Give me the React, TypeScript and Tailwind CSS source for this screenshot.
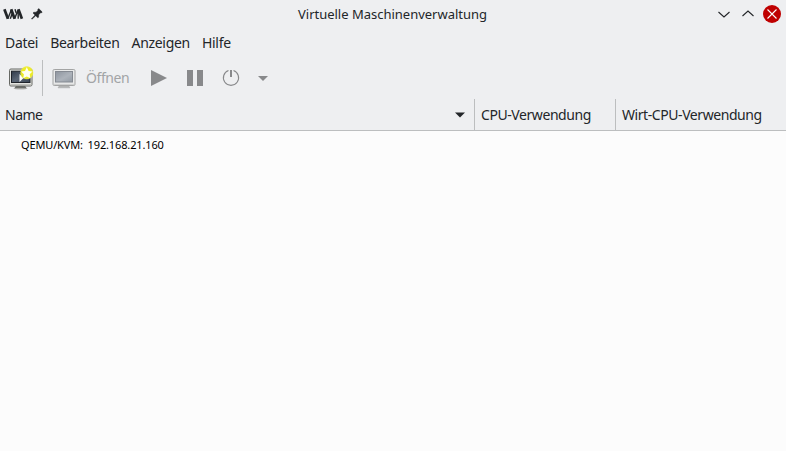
import type { ReactNode } from "react";

function Logo() {
  return (
    <svg className="h-[12px] w-[21px]" viewBox="0 0 21 12" fill="none">
      <g stroke="#232629" strokeWidth="2.7" strokeLinejoin="miter">
        <path d="M1.4 1.2L4.9 10.8" />
        <path d="M8.2 1.2L11.6 10.8" />
        <path d="M15.4 1.2L18.9 10.8" />
      </g>
      <g stroke="#232629" strokeWidth="1.4">
        <path d="M4.8 10.8L8.4 1.8" />
        <path d="M7.3 10.8L9.2 5.5" />
        <path d="M11.6 10.8L15.2 1.8V10.8" />
        <path d="M12 1.2L13.2 5" />
      </g>
    </svg>
  );
}

function Pin() {
  return (
    <svg className="h-[12px] w-[12px]" viewBox="0 0 12 12" fill="#232629">
      <path d="M7.7.6L11.2 4L10.3 4.9L9.6 4.7L7.7 6.8L7.6 9.2L6.8 9.8L4.7 7.8L1 11.2L.5 10.8L4 7.1L2 5L2.7 4.3L5.1 4.2L7 2.2L6.8 1.5Z" stroke="#232629" strokeWidth=".5" />
    </svg>
  );
}

function NewMachine() {
  return (
    <svg className="h-[24px] w-[26px]" viewBox="0 0 26 24">
      <defs>
        <linearGradient id="screen" x1="0" y1="0" x2="1" y2="1">
          <stop stopColor="#303a49" />
          <stop offset=".5" stopColor="#5b6675" />
          <stop offset="1" stopColor="#3a4553" />
        </linearGradient>
        <radialGradient id="glow">
          <stop offset=".6" stopColor="#f0ee20" />
          <stop offset=".85" stopColor="#eeed30" stopOpacity=".9" />
          <stop offset="1" stopColor="#eeed45" stopOpacity="0" />
        </radialGradient>
      </defs>
      <ellipse cx="12.5" cy="22.3" rx="7" ry="1.2" fill="#b8b9b6" />
      <path d="M8 19.5H17L18.5 22.3H6.5Z" fill="#6b6d69" />
      <rect x="1.5" y="3" width="22.5" height="17" rx="1.4" fill="#e3e4e0" stroke="#666864" />
      <rect x="3.5" y="5.2" width="18.5" height="11.3" fill="url(#screen)" stroke="#20242b" />
      <path d="M2.3 18.6H23" stroke="#bcbdb9" />
      <path d="M11.5 8V16L15.5 12Z" fill="#fff" />
      <circle cx="18.8" cy="6.8" r="7" fill="url(#glow)" />
      <path d="M18.8 1.3L20.6 5L24.5 5.6L21.7 8.3L22.4 12.3L18.8 10.4L15.2 12.3L15.9 8.3L13.1 5.6L17 5Z" fill="#fffff2" />
    </svg>
  );
}

function Monitor() {
  return (
    <svg className="mt-[2px] h-[20px] w-[24px]" viewBox="0 0 24 20">
      <defs>
        <linearGradient id="dim" x1="0" y1="0" x2="1" y2="1">
          <stop stopColor="#8d949e" />
          <stop offset=".55" stopColor="#adb3bb" />
          <stop offset="1" stopColor="#929aa3" />
        </linearGradient>
      </defs>
      <path d="M7.5 16.5H16.5L18 18.8H6Z" fill="#b2b3b3" stroke="#a5a6a6" strokeWidth=".5" />
      <rect x="1" y=".5" width="22" height="16" rx="1.2" fill="#e9eaea" stroke="#a3a4a4" />
      <rect x="3.5" y="2.5" width="17" height="10.5" fill="url(#dim)" stroke="#858a92" />
      <path d="M2 15.4H22" stroke="#cccdcd" />
    </svg>
  );
}

function Header({ children, className }: { children: ReactNode; className: string }) {
  return <div className={`flex h-full items-center ${className}`}>{children}</div>;
}

export default function App() {
  return (
    <div className="flex h-[451px] w-[786px] flex-col overflow-hidden bg-[#fcfcfc] font-['Noto_Sans',sans-serif] text-[14px] leading-[20px] tracking-[-0.3px] text-[#232629]">
      <header className="grid h-[28px] shrink-0 grid-cols-[1fr_auto_1fr] items-center bg-[#eeeff1]">
        <div className="flex items-center gap-[7px] pl-[3px]">
          <Logo />
          <Pin />
        </div>
        <h1 className="pr-px text-[13px] tracking-[-0.01px]">Virtuelle Maschinenverwaltung</h1>
        <div className="flex items-center justify-end pr-[4px]">
          <svg className="h-[20px] w-[64px]" viewBox="0 0 64 20" fill="none">
            <path d="M.5 8L6 13L11.5 8M24.5 12L30 7L35.5 12" stroke="#232629" strokeWidth="1.1" />
            <circle cx="54" cy="10" r="9" fill="#bf0000" />
            <path d="M49.5 5.5L58.5 14.5M58.5 5.5L49.5 14.5" stroke="#fcfcfc" strokeWidth="1.1" />
          </svg>
        </div>
      </header>
      <nav className="flex h-[30px] shrink-0 items-center gap-[12px] bg-[#eeeff1] pl-[5px]">
        <span>Datei</span>
        <span>Bearbeiten</span>
        <span>Anzeigen</span>
        <span>Hilfe</span>
      </nav>
      <div className="flex h-[41px] shrink-0 items-center bg-[#eeeff1] pb-px pl-[8px] text-[#a2a4a6]">
        <NewMachine />
        <div className="mr-[9px] ml-[8px] h-[36px] w-px bg-[#bcbebf]" />
        <Monitor />
        <span className="ml-[10px] w-[44px] tracking-[-0.4px]">Öffnen</span>
        <svg className="ml-[20px] h-[20px] w-[120px]" viewBox="0 0 120 20" fill="#88898b">
          <path d="M1 2V18L17 10Z" />
          <path d="M37 2H43V18H37ZM47 2H53V18H47Z" />
          <path d="M78.5 2.6A7.6 7.6 0 1 0 83.5 2.6" fill="none" stroke="#88898b" strokeWidth="1.1" />
          <path d="M80 2H82V9H80Z" />
          <path d="M108 8H118L113 13Z" />
        </svg>
      </div>
      <div className="flex h-[32px] shrink-0 items-center border-b border-[#bcbebf] bg-[#eeeff1]">
        <Header className="w-[474px] justify-between pr-[9px] pl-[5px] tracking-[-0.5px]">
          <span>Name</span>
          <svg className="h-[6px] w-[10px]" viewBox="0 0 10 6">
            <path d="M0 .5H10L5 5.5Z" fill="#232629" />
          </svg>
        </Header>
        <Header className="w-[141px] border-l border-[#bcbebf] pl-[6px] tracking-[-0.43px]">CPU-Verwendung</Header>
        <Header className="flex-1 border-l border-[#bcbebf] pl-[6px] tracking-[-0.43px]">Wirt-CPU-Verwendung</Header>
      </div>
      <main className="flex-1 pt-[4px] pl-[21px] text-[11px] tracking-[-0.14px] [word-spacing:2px] text-black">QEMU/KVM: 192.168.21.160</main>
    </div>
  );
}
